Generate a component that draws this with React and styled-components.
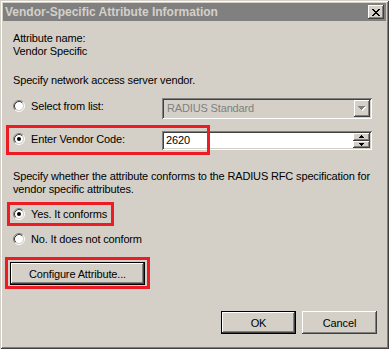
import styled, { createGlobalStyle } from "styled-components";

const GlobalStyle = createGlobalStyle`
  html, body {
    margin: 0;
    padding: 0;
    background: #d4d0c8;
  }
  body {
    width: 389px;
    height: 349px;
    overflow: hidden;
    font-family: "Liberation Sans", Arial, sans-serif;
    font-size: 11px;
    letter-spacing: -0.15px;
    color: #000;
  }
`;

const raised = `
  box-shadow: inset -1px -1px #404040, inset 1px 1px #ffffff,
    inset -2px -2px #808080, inset 2px 2px #d4d0c8;
`;

const sunken = `
  box-shadow: inset 1px 1px #808080, inset -1px -1px #ffffff,
    inset 2px 2px #404040, inset -2px -2px #d4d0c8;
`;

const Window = styled.div`
  box-sizing: border-box;
  width: 389px;
  height: 349px;
  padding: 3px;
  background: #d4d0c8;
  display: flex;
  flex-direction: column;
  box-shadow: inset 1px 1px #d4d0c8, inset -1px -1px #404040,
    inset 2px 2px #ffffff, inset -2px -2px #808080;
`;

const TitleBar = styled.div`
  height: 18px;
  flex: none;
  background: #808080;
  color: #d4d0c8;
  font-weight: bold;
  font-size: 12px;
  letter-spacing: 0;
  display: flex;
  align-items: center;
  justify-content: space-between;
  padding: 0 2px 0 2px;
  white-space: nowrap;
`;

const CloseButton = styled.div`
  width: 16px;
  height: 14px;
  background: #d4d0c8;
  display: flex;
  align-items: center;
  justify-content: center;
  ${raised}
`;

const Body = styled.div`
  flex: 1;
  display: flex;
  flex-direction: column;
  padding: 11px 9px 0 7px;
`;

const Text = styled.div`
  line-height: 13px;
  padding-left: 3px;
  margin-top: ${(p) => p.$mt || 0}px;
  white-space: nowrap;
`;

const ControlRow = styled.div`
  position: relative;
  display: grid;
  grid-template-columns: 149px 1fr;
  align-items: center;
  margin: ${(p) => p.$mt}px 5px 0 3px;
`;

const RadioRow = styled.label`
  position: relative;
  display: flex;
  align-items: center;
  gap: 6px;
  height: 16px;
  white-space: nowrap;
  margin-left: ${(p) => (p.$inRow ? 0 : 3)}px;
  margin-top: ${(p) => p.$mt || 0}px;
  align-self: flex-start;
`;

const Combo = styled.div`
  box-sizing: border-box;
  height: 21px;
  padding: 2px;
  background: #d4d0c8;
  display: flex;
  ${sunken}
`;

const ComboText = styled.span`
  flex: 1;
  padding-left: 3px;
  line-height: 17px;
  color: #808080;
`;

const ArrowButton = styled.div`
  width: 16px;
  height: 17px;
  background: #d4d0c8;
  display: flex;
  align-items: center;
  justify-content: center;
  ${raised}
`;

const Field = styled.div`
  box-sizing: border-box;
  height: 19px;
  padding: 2px;
  background: #ffffff;
  display: flex;
  ${sunken}
`;

const FieldText = styled.span`
  flex: 1;
  padding-left: 2px;
  line-height: 15px;
`;

const Spinner = styled.div`
  width: 17px;
  display: flex;
  flex-direction: column;
`;

const SpinButton = styled.div`
  flex: 1;
  background: #d4d0c8;
  display: flex;
  align-items: center;
  justify-content: center;
  ${raised}
`;

const Button = styled.div`
  box-sizing: border-box;
  width: ${(p) => p.$w}px;
  height: 23px;
  background: #d4d0c8;
  display: flex;
  align-items: center;
  justify-content: center;
  ${(p) =>
    p.$primary
      ? `border: 1px solid #000000;
         box-shadow: inset -1px -1px #404040, inset 1px 1px #ffffff,
           inset -2px -2px #808080, inset 2px 2px #d4d0c8;`
      : raised}
`;

const ButtonSpot = styled.div`
  position: relative;
  align-self: flex-start;
  margin-top: 15px;
`;

const Footer = styled.div`
  display: flex;
  justify-content: flex-end;
  gap: 6px;
  margin-top: 26px;
`;

const Highlight = styled.div`
  position: absolute;
  box-sizing: border-box;
  left: ${(p) => p.$x}px;
  top: ${(p) => p.$y}px;
  width: ${(p) => p.$w}px;
  height: ${(p) => p.$h}px;
  border: 3px solid #ed1c24;
  pointer-events: none;
`;

function Radio({ checked }) {
  return (
    <svg width="12" height="12" viewBox="0 0 12 12">
      <circle cx="6" cy="6" r="4" fill="#ffffff" />
      <path d="M2.11 9.89 A5.5 5.5 0 0 1 9.89 2.11" fill="none" stroke="#808080" />
      <path d="M9.89 2.11 A5.5 5.5 0 0 1 2.11 9.89" fill="none" stroke="#ffffff" />
      <path d="M2.82 9.18 A4.5 4.5 0 0 1 9.18 2.82" fill="none" stroke="#404040" />
      <path d="M9.18 2.82 A4.5 4.5 0 0 1 2.82 9.18" fill="none" stroke="#d4d0c8" />
      {checked && <circle cx="6" cy="6" r="2" fill="#000000" />}
    </svg>
  );
}

function CloseGlyph() {
  const rows = ["11000011", "01100110", "00111100", "00011000", "00111100", "01100110", "11000011"];
  return (
    <svg width="8" height="7" viewBox="0 0 8 7" shapeRendering="crispEdges">
      {rows.map((r, y) =>
        r.split("").map((c, x) =>
          c === "1" ? <rect key={`${x}-${y}`} x={x} y={y} width="1" height="1" fill="#000" /> : null
        )
      )}
    </svg>
  );
}

function ComboArrow() {
  return (
    <svg width="8" height="5" viewBox="0 0 8 5" shapeRendering="crispEdges">
      <polygon points="1,1 8,1 4.5,5" fill="#ffffff" />
      <polygon points="0,0 7,0 3.5,4" fill="#808080" />
    </svg>
  );
}

function SpinArrow({ down }) {
  return (
    <svg width="5" height="3" viewBox="0 0 5 3" shapeRendering="crispEdges">
      <polygon points={down ? "0,0 5,0 2.5,3" : "0,3 5,3 2.5,0"} fill="#000" />
    </svg>
  );
}

export default function App() {
  return (
    <>
      <GlobalStyle />
      <Window>
        <TitleBar>
          <span>Vendor-Specific Attribute Information</span>
          <CloseButton>
            <CloseGlyph />
          </CloseButton>
        </TitleBar>
        <Body>
          <Text>Attribute name:</Text>
          <Text>Vendor Specific</Text>
          <Text $mt={16}>Specify network access server vendor.</Text>

          <ControlRow $mt={11}>
            <RadioRow $inRow>
              <Radio />
              Select from list:
            </RadioRow>
            <Combo>
              <ComboText>RADIUS Standard</ComboText>
              <ArrowButton>
                <ComboArrow />
              </ArrowButton>
            </Combo>
          </ControlRow>

          <ControlRow $mt={12}>
            <RadioRow $inRow>
              <Radio checked />
              Enter Vendor Code:
            </RadioRow>
            <Field>
              <FieldText>2620</FieldText>
              <Spinner>
                <SpinButton>
                  <SpinArrow />
                </SpinButton>
                <SpinButton>
                  <SpinArrow down />
                </SpinButton>
              </Spinner>
            </Field>
            <Highlight $x={-7} $y={-6} $w={204} $h={30} />
          </ControlRow>

          <Text $mt={20}>Specify whether the attribute conforms to the RADIUS RFC specification for</Text>
          <Text>vendor specific attributes.</Text>

          <RadioRow $mt={10}>
            <Radio checked />
            Yes. It conforms
            <Highlight $x={-6} $y={-4} $w={107} $h={24} />
          </RadioRow>
          <RadioRow $mt={9}>
            <Radio />
            No. It does not conform
          </RadioRow>

          <ButtonSpot>
            <Button $w={135} $primary>Configure Attribute...</Button>
            <Highlight $x={-5} $y={-5} $w={145} $h={32} />
          </ButtonSpot>

          <Footer>
            <Button $w={75} $primary>OK</Button>
            <Button $w={75}>Cancel</Button>
          </Footer>
        </Body>
      </Window>
    </>
  );
}
